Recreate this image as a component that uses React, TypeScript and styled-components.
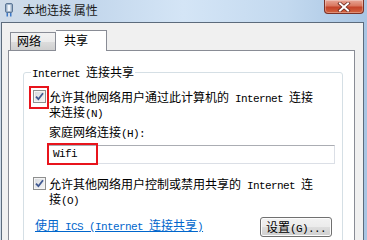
import React from 'react';
import styled, {createGlobalStyle} from 'styled-components';

const CJK = `"Noto Sans CJK SC", "Noto Sans", sans-serif`;

const GlobalStyle = createGlobalStyle`
  html, body {
    margin: 0;
    padding: 0;
  }
  body {
    width: 367px;
    height: 240px;
    overflow: hidden;
    background: #b9d1ea;
  }
`;

const Window = styled.div`
  width: 367px;
  height: 240px;
  display: flex;
  flex-direction: column;
  overflow: hidden;
  background: linear-gradient(to right, #cfdbe8 0%, #c3d7ec 25%, #d4e5f6 50%, #c3d9ef 78%, #a8c5e3 100%);
  font-family: ${CJK};
  font-size: 12px;
  color: #000;
`;

const TitleBar = styled.div`
  height: 22px;
  flex: none;
  display: flex;
  align-items: flex-start;
  padding-left: 5px;
`;

const TitleIcon = styled.svg`
  margin-top: 3px;
  flex: none;
`;

const TitleText = styled.span`
  margin-left: 10px;
  line-height: 20px;
  color: #1a1a1a;
`;

const CloseButton = styled.div`
  margin-left: auto;
  margin-right: 3px;
  width: 40px;
  height: 14px;
  box-sizing: border-box;
  border: 1px solid #7c3126;
  border-top: none;
  border-radius: 0 0 4px 4px;
  background: linear-gradient(#e8a697 0%, #d9775f 45%, #c4432a 55%, #d2633f 100%);
  box-shadow: inset 0 0 0 1px rgba(255, 255, 255, 0.3);
  display: flex;
  align-items: center;
  justify-content: center;
`;

const Client = styled.div`
  flex: 1;
  min-height: 0;
  margin: 0 3px 0 1px;
  border: 1px solid #5c6b7c;
  border-bottom: none;
  background: #f0f0f0;
  padding: 7px 8px 0 6px;
  display: flex;
  flex-direction: column;
`;

const TabStrip = styled.div`
  height: 21px;
  flex: none;
  display: flex;
  align-items: flex-end;
  padding-left: 2px;
  margin-bottom: -1px;
  position: relative;
  z-index: 1;
`;

const Tab = styled.div<{$active?: boolean; $w: number; $pad: number}>`
  box-sizing: border-box;
  width: ${p => p.$w}px;
  height: ${p => (p.$active ? 21 : 18)}px;
  margin-bottom: ${p => (p.$active ? 0 : 1)}px;
  padding-left: ${p => p.$pad}px;
  border: 1px solid #898c95;
  border-bottom: none;
  ${p => (p.$active ? 'border-left: none;' : '')}
  background: ${p => (p.$active ? '#fff' : 'linear-gradient(#f2f2f2, #ebebeb 50%, #dddddd 51%, #cfcfcf)')};
  line-height: ${p => (p.$active ? 18 : 16)}px;
  font-size: 12px;
`;

const Panel = styled.div`
  flex: 1;
  background: #fff;
  border: 1px solid #898c95;
  border-bottom: none;
  padding: 14px 11px 0 14px;
`;

const Group = styled.fieldset`
  margin: 0;
  min-width: 0;
  border: 1px solid #d5dfe5;
  border-radius: 3px;
  padding: 10px 8px 11px 9px;
`;

const GroupTitle = styled.legend`
  padding: 0 1px;
  margin-left: -2px;
  line-height: 14px;
  font-size: 12px;
`;

const Lat = styled.span`
  font-family: "Liberation Mono", "DejaVu Sans Mono", monospace;
  font-size: 11px;
  letter-spacing: -0.6px;
  line-height: 1;
`;

const CheckRow = styled.div<{$gap: number}>`
  display: flex;
  align-items: flex-start;
  gap: 3px;
  margin-top: ${p => p.$gap}px;
`;

const CheckBox = styled.span`
  position: relative;
  flex: none;
  width: 13px;
  height: 13px;
  box-sizing: border-box;
  border: 1px solid #8e8f8f;
  background: linear-gradient(135deg, #d6d9de, #f6f6f6);
  box-shadow: inset 0 0 0 1px #f4f4f4;
  display: flex;
  align-items: center;
  justify-content: center;
`;

const CheckLabel = styled.div`
  display: flex;
  flex-direction: column;
`;

const Line = styled.span`
  display: block;
  line-height: 13px;
`;

const FieldLabel = styled.div`
  margin-top: 5px;
  padding-left: 16px;
  line-height: 13px;
`;

const TextField = styled.div`
  position: relative;
  box-sizing: border-box;
  width: 287px;
  height: 19px;
  margin: 5px 0 0 15px;
  border: 1px solid #dbdfe6;
  border-top-color: #abadb3;
  background: #fff;
  padding-left: 4px;
  display: flex;
  align-items: center;
`;

const Marker = styled.span<{$l: number; $t: number; $w: number; $h: number}>`
  position: absolute;
  left: ${p => p.$l}px;
  top: ${p => p.$t}px;
  width: ${p => p.$w}px;
  height: ${p => p.$h}px;
  box-sizing: border-box;
  border: 2px solid #e8141c;
  pointer-events: none;
`;

const ActionRow = styled.div`
  display: flex;
  align-items: flex-start;
  justify-content: space-between;
  margin-top: 10px;
  padding-left: 2px;
`;

const HelpLink = styled.a`
  margin-top: 1px;
  line-height: 13px;
  color: #0066cc;
  text-decoration: underline;
  cursor: pointer;
`;

const Button = styled.button`
  width: 72px;
  height: 20px;
  margin-right: 2px;
  box-sizing: border-box;
  border: 1px solid #707070;
  border-radius: 3px;
  background: linear-gradient(#f2f2f2, #ebebeb 50%, #dddddd 51%, #cfcfcf);
  box-shadow: inset 0 0 0 1px #fcfcfc;
  font-family: ${CJK};
  font-size: 12px;
  line-height: 16px;
  color: #000;
  padding: 0;
`;

const Check = () => (
  <svg width="9" height="9" viewBox="0 0 9 9">
    <path d="M1 4.6 L3.4 7.2 L8 1.2" fill="none" stroke="#3f5891" strokeWidth="1.8" />
  </svg>
);

const App = () => (
  <Window>
    <GlobalStyle />
    <TitleBar>
      <TitleIcon width="8" height="14" viewBox="0 0 8 14">
        <rect x="0.5" y="0.5" width="7" height="9" rx="1.5" fill="#9fb3c9" stroke="#5c7796" />
        <rect x="2.5" y="2" width="3" height="6" fill="#eef4fa" />
        <rect x="1.5" y="10" width="1.5" height="3.5" fill="#3d78c6" />
        <rect x="5" y="10" width="1.5" height="3.5" fill="#3d78c6" />
      </TitleIcon>
      <TitleText>本地连接 属性</TitleText>
      <CloseButton>
        <svg width="14" height="10" viewBox="0 0 14 10">
          <path d="M3 1.5 L11 8.5 M11 1.5 L3 8.5" stroke="#6b2a20" strokeWidth="3.6" strokeLinecap="square" />
          <path d="M3 1.5 L11 8.5 M11 1.5 L3 8.5" stroke="#fff" strokeWidth="2" strokeLinecap="square" />
        </svg>
      </CloseButton>
    </TitleBar>
    <Client>
      <TabStrip>
        <Tab $w={46} $pad={6}>网络</Tab>
        <Tab $active $w={51} $pad={8}>共享</Tab>
      </TabStrip>
      <Panel>
        <Group>
          <GroupTitle>
            <Lat>Internet </Lat>连接共享
          </GroupTitle>
          <CheckRow $gap={0}>
            <CheckBox>
              <Check />
              <Marker $l={-5} $t={-5} $w={20} $h={23} />
            </CheckBox>
            <CheckLabel>
              <Line>
                允许其他网络用户通过此计算机的<Lat> Internet </Lat>连接
              </Line>
              <Line>
                来连接<Lat>(N)</Lat>
              </Line>
            </CheckLabel>
          </CheckRow>
          <FieldLabel>
            家庭网络连接<Lat>(H):</Lat>
          </FieldLabel>
          <TextField>
            <Lat>Wifi</Lat>
            <Marker $l={-2} $t={-3} $w={51} $h={22} />
          </TextField>
          <CheckRow $gap={13}>
            <CheckBox>
              <Check />
            </CheckBox>
            <CheckLabel>
              <Line>
                允许其他网络用户控制或禁用共享的<Lat> Internet </Lat>连
              </Line>
              <Line>
                接<Lat>(O)</Lat>
              </Line>
            </CheckLabel>
          </CheckRow>
          <ActionRow>
            <HelpLink>
              使用<Lat> ICS (Internet </Lat>连接共享<Lat>)</Lat>
            </HelpLink>
            <Button>
              设置<Lat>(G)...</Lat>
            </Button>
          </ActionRow>
        </Group>
      </Panel>
    </Client>
  </Window>
);

export default App;
